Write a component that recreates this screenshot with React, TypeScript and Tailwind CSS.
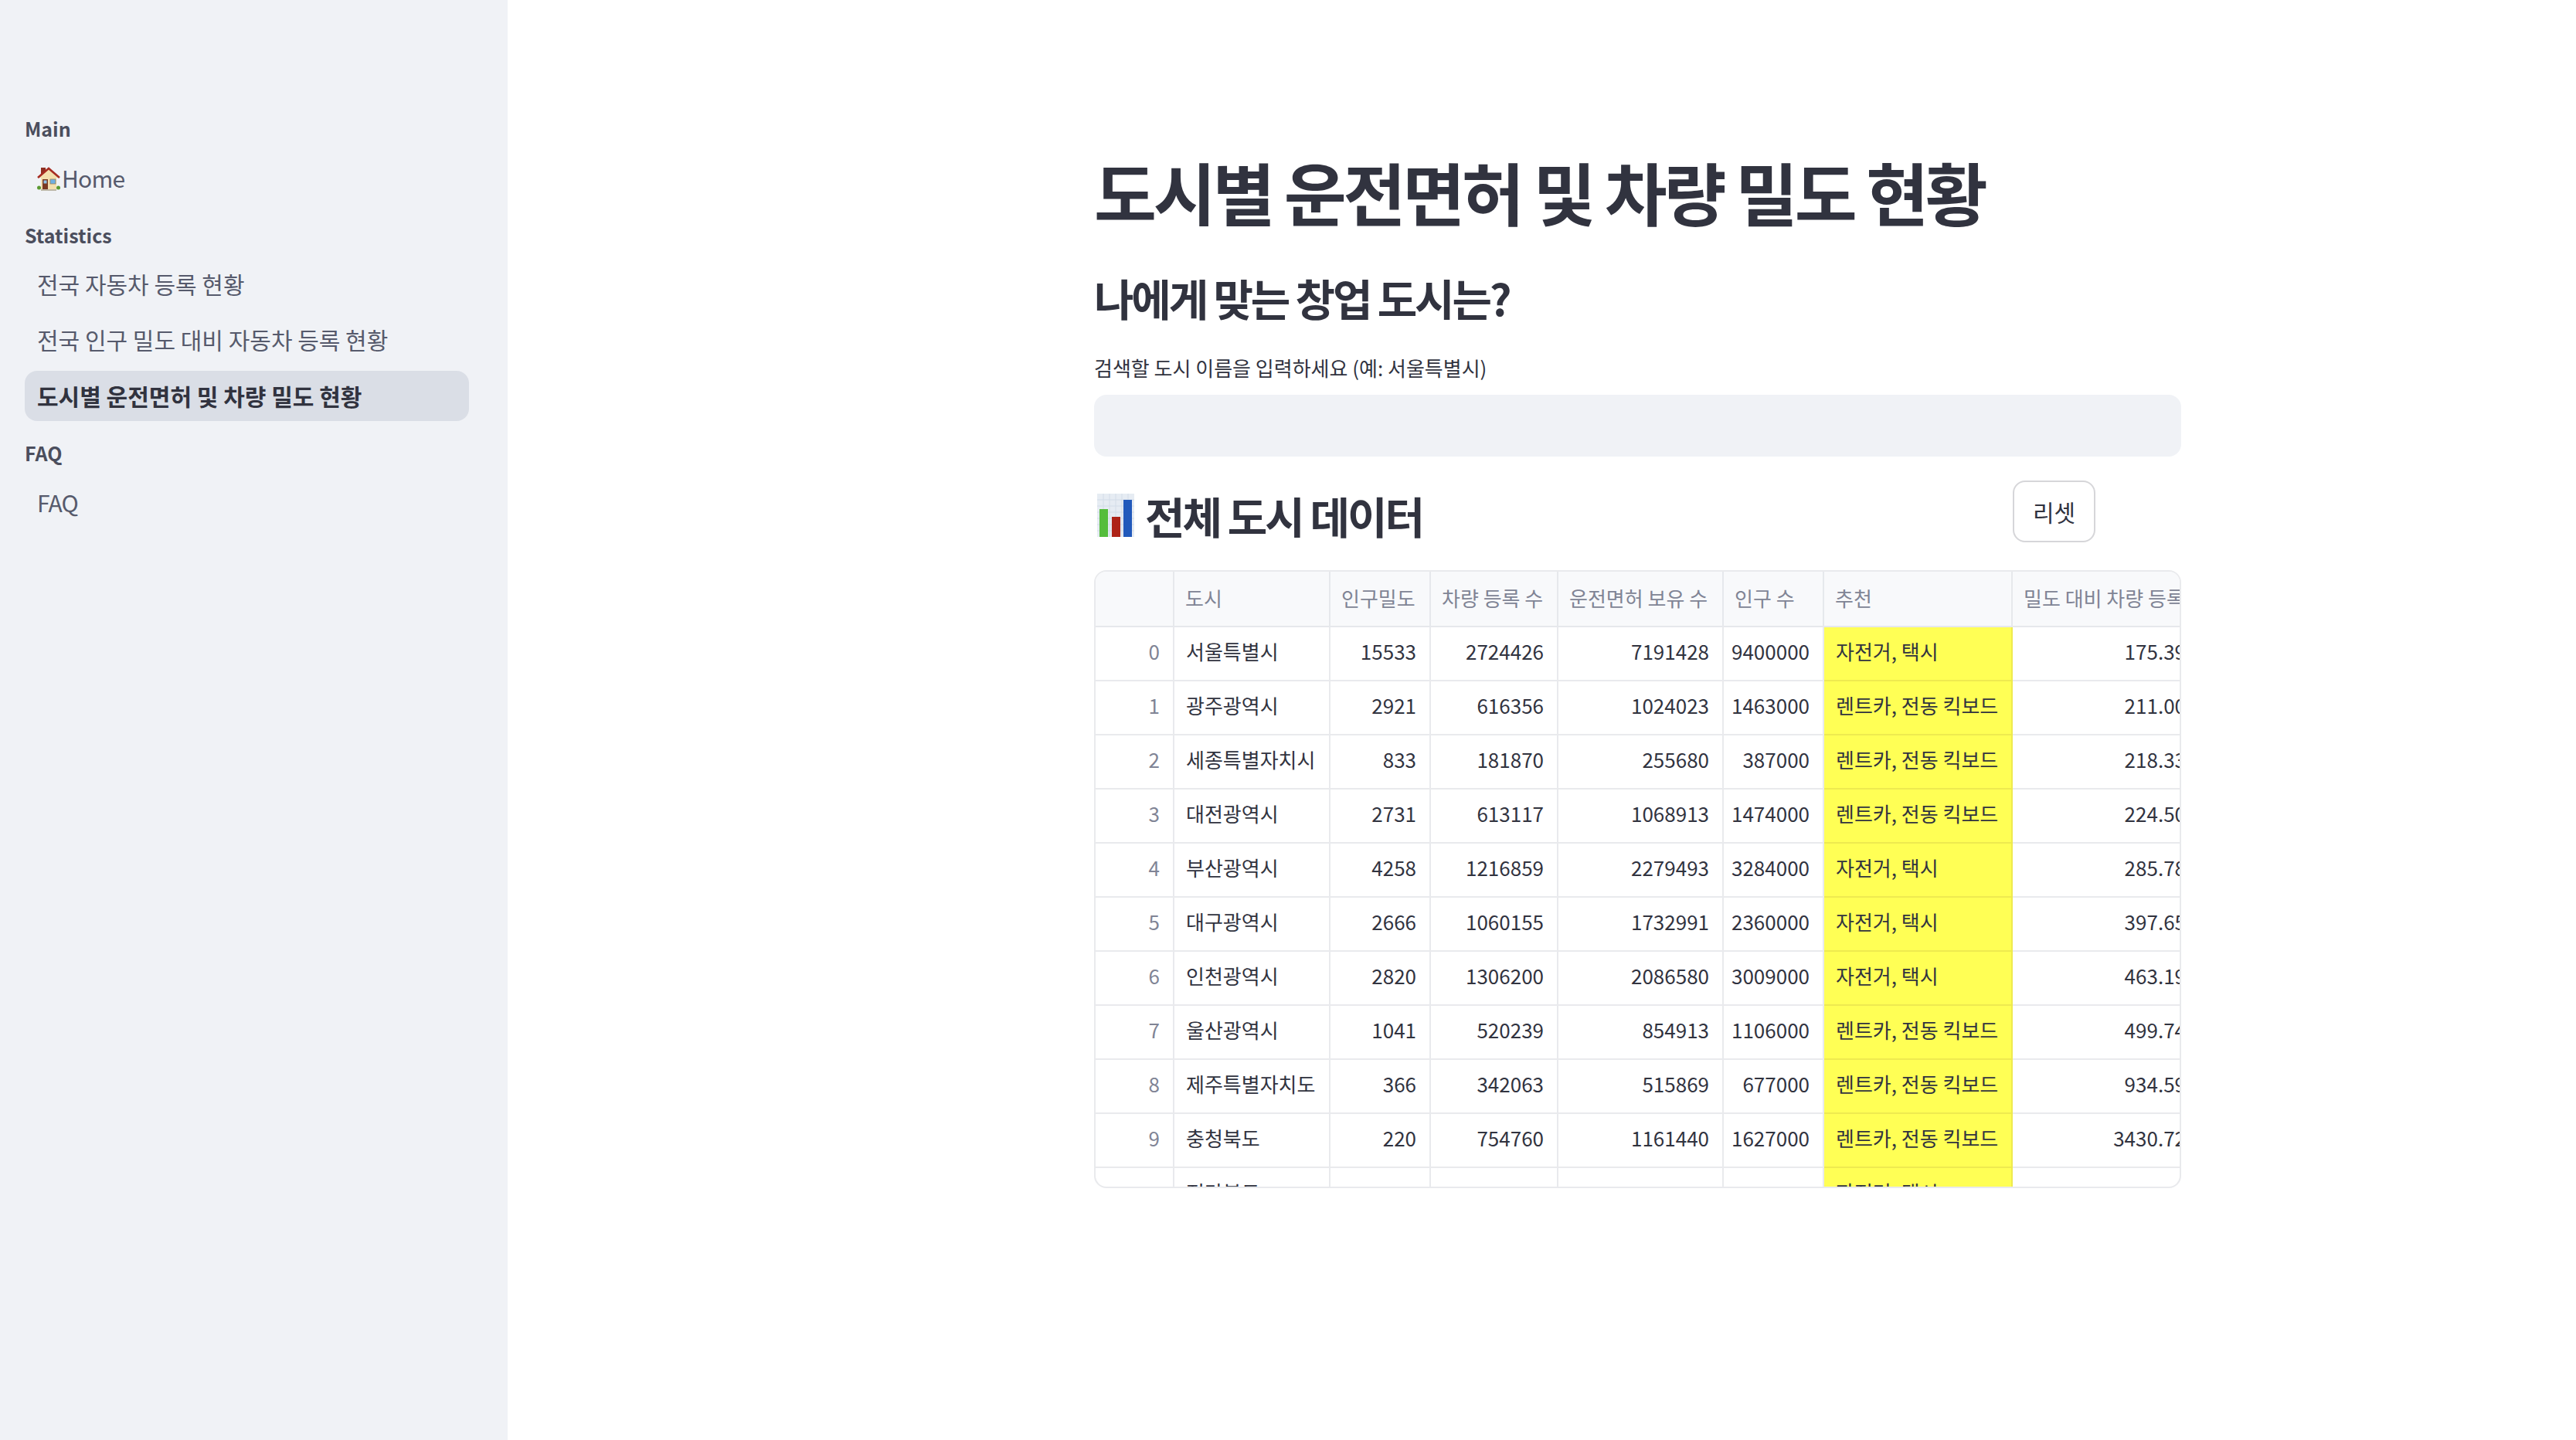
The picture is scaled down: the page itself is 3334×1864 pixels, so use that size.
const rows: string[][] = [
  ["0", "서울특별시", "15533", "2724426", "7191428", "9400000", "자전거, 택시", "175.39"],
  ["1", "광주광역시", "2921", "616356", "1024023", "1463000", "렌트카, 전동 킥보드", "211.00"],
  ["2", "세종특별자치시", "833", "181870", "255680", "387000", "렌트카, 전동 킥보드", "218.33"],
  ["3", "대전광역시", "2731", "613117", "1068913", "1474000", "렌트카, 전동 킥보드", "224.50"],
  ["4", "부산광역시", "4258", "1216859", "2279493", "3284000", "자전거, 택시", "285.78"],
  ["5", "대구광역시", "2666", "1060155", "1732991", "2360000", "자전거, 택시", "397.65"],
  ["6", "인천광역시", "2820", "1306200", "2086580", "3009000", "자전거, 택시", "463.19"],
  ["7", "울산광역시", "1041", "520239", "854913", "1106000", "렌트카, 전동 킥보드", "499.74"],
  ["8", "제주특별자치도", "366", "342063", "515869", "677000", "렌트카, 전동 킥보드", "934.59"],
  ["9", "충청북도", "220", "754760", "1161440", "1627000", "렌트카, 전동 킥보드", "3430.72"],
  ["", "전라북도", "", "", "", "", "자전거, 택시", ""],
];

const widths = ["w-[102px]", "w-[202px]", "w-[130px]", "w-[165px]", "w-[214px]", "w-[130px]", "w-[244px]", "w-[243px]"];
const headers = ["", "도시", "인구밀도", "차량 등록 수", "운전면허 보유 수", "인구 수", "추천", "밀도 대비 차량 등록 수"];

function HouseIcon() {
  return (
    <svg viewBox="0 0 30 32" className="w-[30px] h-[32px] shrink-0" aria-hidden="true">
      <rect x="5" y="2" width="6" height="8" fill="#8e2f22" />
      <rect x="5" y="13" width="20" height="17" fill="#f3dfae" />
      <path d="M1 15 L15 3 L29 15" fill="#f3dfae" stroke="#a62c22" strokeWidth="2.6" />
      <rect x="7" y="17" width="7" height="13" fill="#7a3a22" />
      <rect x="8.5" y="18.5" width="4" height="4" fill="#8fc3e8" />
      <rect x="17" y="17" width="7" height="6" fill="#6fb0e4" stroke="#9a8058" strokeWidth="0.8" />
      <circle cx="2.5" cy="28" r="2.5" fill="#5c9a32" />
      <circle cx="27.5" cy="28" r="2.5" fill="#5c9a32" />
      <rect x="5" y="30" width="20" height="2" fill="#bdb7a7" />
    </svg>
  );
}

function ChartIcon() {
  return (
    <svg viewBox="0 0 48 56" className="w-[48px] h-[56px] shrink-0" aria-hidden="true">
      <rect width="48" height="56" fill="#e6ecf3" />
      <path d="M0 8H48M0 16H48M0 24H48M0 32H48M0 40H48M0 48H48M8 0V56M16 0V56M24 0V56M32 0V56M40 0V56" stroke="#d3dce8" strokeWidth="1" />
      <rect x="3" y="20" width="11" height="36" fill="#55bd3c" />
      <rect x="19" y="30" width="11" height="26" fill="#ae2318" />
      <rect x="34" y="8" width="11" height="48" fill="#2159bb" />
    </svg>
  );
}

function NavItem({ children, active }: { children: React.ReactNode; active?: boolean }) {
  return (
    <div
      className={
        active
          ? "h-[65px] flex items-center px-4 rounded-2xl bg-[#dadee6] text-[#31333f] text-[30px] font-semibold"
          : "h-[63px] flex items-center px-4 rounded-2xl text-[#565a6c] text-[30px]"
      }
    >
      {children}
    </div>
  );
}

function SectionLabel({ children }: { children: React.ReactNode }) {
  return <div className="h-[40px] flex items-center text-[25px] font-semibold text-[#4b4e5d]">{children}</div>;
}

export default function App() {
  return (
    <div className="flex h-[1864px] w-[3334px] overflow-hidden bg-white font-['Noto_Sans_CJK_KR',sans-serif] text-[#31333f]">
      <aside className="w-[657px] shrink-0 bg-[#f0f2f6] pt-[147px] pl-[32px] pr-[50px]">
        <SectionLabel>Main</SectionLabel>
        <div className="mt-[12px]">
          <NavItem>
            <span className="flex items-center tracking-[-0.8px]">
              <HouseIcon />
              <span className="ml-[2px]">Home</span>
            </span>
          </NavItem>
        </div>
        <div className="mt-[23px]">
          <SectionLabel>Statistics</SectionLabel>
        </div>
        <div className="mt-[11px] flex flex-col gap-[9px]">
          <NavItem>전국 자동차 등록 현황</NavItem>
          <NavItem>전국 인구 밀도 대비 자동차 등록 현황</NavItem>
          <NavItem active>도시별 운전면허 및 차량 밀도 현황</NavItem>
        </div>
        <div className="mt-[22px]">
          <SectionLabel>FAQ</SectionLabel>
        </div>
        <div className="mt-[12px]">
          <NavItem>
            <span className="tracking-[-0.8px]">FAQ</span>
          </NavItem>
        </div>
      </aside>

      <main className="flex-1 min-w-0 pl-[759px]">
        <div className="w-[1407px] pt-[186px]">
          <h1 className="h-[122px] flex items-center text-[88px] font-bold tracking-[-4.25px] whitespace-nowrap">
            도시별 운전면허 및 차량 밀도 현황
          </h1>
          <h2 className="mt-[41px] h-[72px] flex items-center text-[56px] font-semibold tracking-[-3.2px] whitespace-nowrap">
            나에게 맞는 창업 도시는?
          </h2>
          <label className="mt-[36px] h-[36px] flex items-center text-[26px]">검색할 도시 이름을 입력하세요 (예: 서울특별시)</label>
          <div className="mt-[18px] h-[80px] rounded-2xl bg-[#f0f2f6]" />

          <div className="mt-[31px] flex items-start h-[80px]">
            <div className="flex-1 flex items-center h-[90px] text-[56px] font-semibold tracking-[-3px] whitespace-nowrap">
              <span className="ml-[4px] flex items-center">
                <ChartIcon />
                <span className="ml-[14px]">전체 도시 데이터</span>
              </span>
            </div>
            <button className="mr-[111px] w-[107px] h-[80px] rounded-2xl border-2 border-[#d6d6d9] bg-white text-[30px] text-[#31333f]">
              리셋
            </button>
          </div>

          <div className="mt-[36px] h-[800px] rounded-2xl border-2 border-[#e9eaed] overflow-hidden">
            <div className="flex h-[72px] bg-[#f8f9fb] text-[#808495] text-[26px]">
              {headers.map((h, i) => (
                <div
                  key={i}
                  className={`${widths[i]} shrink-0 h-full border-b-2 border-r-2 border-[#e6e8ec] flex items-center px-[14px] pb-[4px] whitespace-nowrap overflow-hidden`}
                >
                  {h}
                </div>
              ))}
            </div>
            {rows.map((r) => (
              <div key={r[1]} className="flex h-[70px] text-[26px]">
                {r.map((c, i) => (
                  <div
                    key={i}
                    className={`${widths[i]} shrink-0 h-full border-b-2 flex items-center pl-[15px] pr-[17px] pb-[7px] whitespace-nowrap overflow-hidden ${
                      i === 6 ? "bg-[#ffff55] border-[#eeea4f] border-r-2 border-r-[#eeea4f]" : "border-[#e9eaed] border-r-2"
                    } ${i === 0 ? "justify-end text-[#808495]" : i === 1 || i === 6 ? "justify-start" : "justify-end"}`}
                  >
                    {c}
                  </div>
                ))}
              </div>
            ))}
          </div>
        </div>
      </main>
    </div>
  );
}
